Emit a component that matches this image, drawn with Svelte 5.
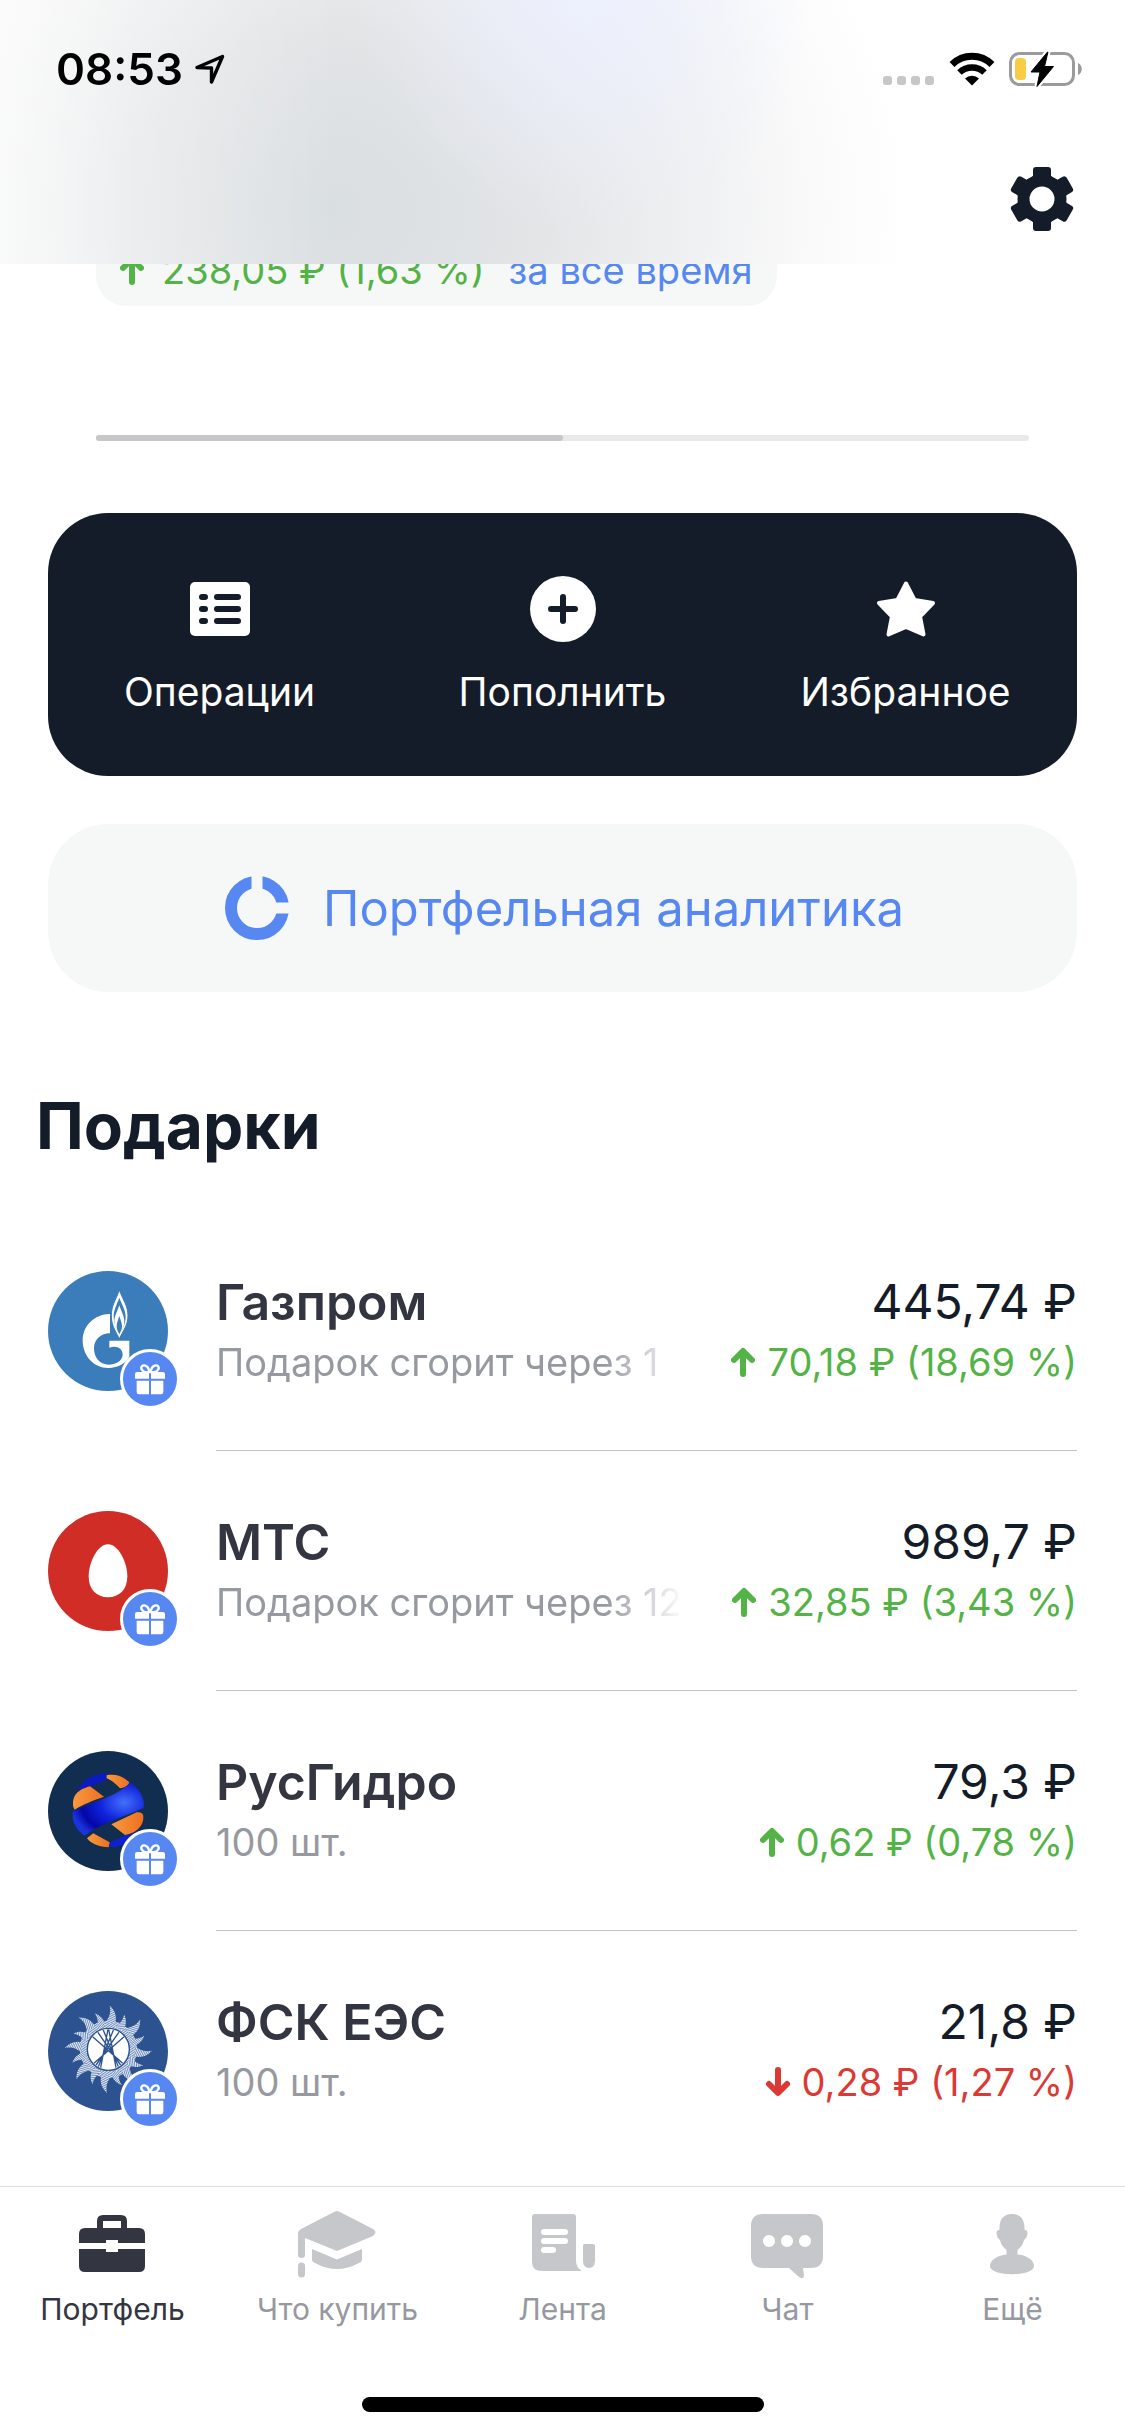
<script>
  const actions = [
    { id: 'operations', label: 'Операции' },
    { id: 'deposit', label: 'Пополнить' },
    { id: 'favorites', label: 'Избранное' }
  ];

  const gifts = [
    { id: 'gazprom', name: 'Газпром', note: 'Подарок сгорит через 1', price: '445,74 ₽', change: '70,18 ₽ (18,69 %)', up: true },
    { id: 'mts', name: 'МТС', note: 'Подарок сгорит через 12', price: '989,7 ₽', change: '32,85 ₽ (3,43 %)', up: true },
    { id: 'rushydro', name: 'РусГидро', note: '100 шт.', price: '79,3 ₽', change: '0,62 ₽ (0,78 %)', up: true },
    { id: 'fsk', name: 'ФСК ЕЭС', note: '100 шт.', price: '21,8 ₽', change: '0,28 ₽ (1,27 %)', up: false }
  ];

  const tabs = [
    { id: 'portfolio', label: 'Портфель' },
    { id: 'buy', label: 'Что купить' },
    { id: 'feed', label: 'Лента' },
    { id: 'chat', label: 'Чат' },
    { id: 'more', label: 'Ещё' }
  ];

  const teeth = [0, 60, 120, 180, 240, 300];

  // sun rays: angle and length factor
  const rays = Array.from({ length: 16 }, (_, i) => ({ angle: i * 22.5 + 8, scale: i % 2 ? 0.88 : 1 }));

  let activeTab = 'portfolio';
</script>

{#snippet arrow(up)}
  <svg class="arrow" class:down={!up} viewBox="0 0 24 30" aria-hidden="true">
    <path d="M12 27V5M3 13l9-9 9 9" fill="none" stroke="currentColor" stroke-width="6" stroke-linecap="round" stroke-linejoin="round" />
  </svg>
{/snippet}

<header class="top">
  <div class="status">
    <div class="status-side">
      <span class="time">08:53</span>
      <svg class="location" viewBox="0 0 30 30" aria-hidden="true">
        <path d="M2 13.500L27.500 2.500L16.500 28V14Z" fill="none" stroke="#000" stroke-width="3.400" stroke-linejoin="round" />
      </svg>
    </div>
    <div class="status-side indicators">
      <svg class="signal" viewBox="0 0 52 34" aria-hidden="true">
        {#each [0, 14, 28, 42] as x}
          <rect {x} y="24" width="9" height="9" rx="3" fill="#c7c7c9" />
        {/each}
      </svg>
      <svg class="wifi" viewBox="0 0 46 34" aria-hidden="true">
        <path d="M3 12.500a28.500 28.500 0 0 1 40 0" fill="none" stroke="#000" stroke-width="7" />
        <path d="M10.500 20.500a18 18 0 0 1 25 0" fill="none" stroke="#000" stroke-width="6.500" />
        <path d="M16 26.500a10 10 0 0 1 14 0L23 33.500Z" />
      </svg>
      <svg class="battery" viewBox="0 0 74 36" aria-hidden="true">
        <rect x="1.500" y="2.500" width="63" height="31" rx="9" fill="none" stroke="#9b9b9d" stroke-width="3" />
        <path d="M69 12c5 2 5 10 0 12Z" fill="#9b9b9d" />
        <rect x="6" y="7" width="11" height="22" rx="4" fill="#f8cd46" />
        <path d="M38.500 1L22 21h9l-3 14.500L44.500 15.500h-9L39 1Z" stroke="#fff" stroke-width="5" />
        <path d="M38.500 1L22 21h9l-3 14.500L44.500 15.500h-9L39 1Z" stroke="#000" stroke-linejoin="round" />
      </svg>
    </div>
  </div>
  <button class="settings" aria-label="Настройки">
    <svg viewBox="-32 -32 64 64" aria-hidden="true">
      <circle r="18.500" fill="none" stroke="#151c29" stroke-width="12" />
      {#each teeth as angle}
        <path d="M-12 -20L-9 -23V-29Q-9 -32 -6 -32H6Q9 -32 9 -29V-23L12 -20Z" fill="#151c29" transform="rotate({angle})" />
      {/each}
    </svg>
  </button>
</header>

<main>
  <section class="summary">
    <button class="profit">
      {@render arrow(true)}
      <span class="gain">238,05 ₽ (1,63 %)</span>
      <span class="period">за все время</span>
    </button>
    <div class="pager"><div class="pager-thumb"></div></div>
  </section>

  <section class="actions">
    {#each actions as action (action.id)}
      <button class="action">
        <svg viewBox="0 0 66 66" aria-hidden="true">
          {#if action.id === 'operations'}
            <rect x="3" y="6" width="60" height="54" rx="5" fill="#fff" />
            <path d="M15 21h3M15 33h3M15 45h3M30 21h21M30 33h21M30 45h21" stroke="#151c29" stroke-width="6" stroke-linecap="round" />
          {:else if action.id === 'deposit'}
            <circle cx="33" cy="33" r="33" fill="#fff" />
            <path d="M33 21v24M21 33h24" stroke="#151c29" stroke-width="6" stroke-linecap="round" />
          {:else}
            <path d="M33 7.500L41.500 24L60 27L47 40.500L50.500 58.500L33 51L15.500 58.500L19 40.500L6 27L24.500 24Z" fill="#fff" stroke="#fff" stroke-width="4" stroke-linejoin="round" />
          {/if}
        </svg>
        <span>{action.label}</span>
      </button>
    {/each}
  </section>

  <button class="analytics">
    <svg viewBox="0 0 64 64" aria-hidden="true">
      <circle cx="32" cy="32" r="26" fill="none" stroke="#5788f2" stroke-width="12" />
      <path d="M26.500 -1h11v21h-11ZM44 26.500h21v11H44Z" fill="#f6f8f8" />
    </svg>
    <span>Портфельная аналитика</span>
  </button>

  <h1>Подарки</h1>

  <ul class="gifts">
    {#each gifts as gift (gift.id)}
      <li class="gift">
        <div class="logo">
          <svg viewBox="0 0 360 360" aria-hidden="true">
            {#if gift.id === 'gazprom'}
              <circle cx="180" cy="180" r="180" fill="#3b7cba" />
              <path d="M186 129C138 129 104 166 104 208C104 256 138 291 180 291C212 291 236 276 244 256V209H184V230C204 222 224 230 224 252C222 272 202 281 182 281C154 281 138 258 138 232C138 206 158 187 186 187Z" fill="#fff" />
              <path d="M214 57C225 88 240 104 240 134C240 162 225 180 214 203C202 180 190 162 190 134C190 104 203 88 214 57Z" fill="#fff" stroke="#3b7cba" stroke-width="3" />
              <path d="M214 80C222 102 233 116 233 138C233 158 224 174 214 192C204 174 197 158 197 138C197 116 206 102 214 80Z" fill="#3b7cba" />
              <path d="M214 103C221 124 229 136 229 150C229 168 222 180 214 194C206 180 199 168 199 150C199 136 207 124 214 103Z" fill="#fff" />
              <path d="M214 135C218 148 222 156 222 166C222 176 218 182 214 190C210 182 206 176 206 166C206 156 210 148 214 135Z" fill="#3b7cba" />
            {:else if gift.id === 'mts'}
              <circle cx="180" cy="180" r="180" fill="#d02d26" />
              <path d="M180 100C212 100 238 156 238 196C238 236 214 259 180 259C146 259 122 236 122 196C122 156 148 100 180 100Z" fill="#fff" />
            {:else if gift.id === 'rushydro'}
              <defs>
                <radialGradient id="band" cx=".72" cy=".38" r=".75">
                  <stop offset="0" stop-color="#4470fa" />
                  <stop offset=".45" stop-color="#1023dc" />
                  <stop offset=".8" stop-color="#0406a6" />
                  <stop offset="1" stop-color="#1a34dd" />
                </radialGradient>
                <linearGradient id="amber" x1="0" x2="1">
                  <stop offset="0" stop-color="#f79a3e" />
                  <stop offset="1" stop-color="#ee6f22" />
                </linearGradient>
              </defs>
              <circle cx="180" cy="180" r="180" fill="#112d50" />
              <path d="M88 116C108 82 144 66 180 67L180 82C162 92 146 100 124 108Z" fill="#0c1bc0" />
              <path d="M76 168C72 140 82 118 126 106L168 137C136 148 104 160 80 176Z" fill="url(#amber)" />
              <path d="M176 73C202 68 226 76 244 94C242 104 230 110 216 112C202 98 194 90 176 82Z" fill="url(#amber)" />
              <path d="M76 180C130 156 214 134 246 94C276 112 292 148 287 170C250 190 160 214 110 254C82 236 68 204 76 180Z" fill="url(#band)" />
              <path d="M190 220L266 184C276 182 286 186 286 196C288 222 268 246 231 252Z" fill="url(#amber)" />
              <path d="M117 262L136 247L185 274L182 289C154 289 130 278 117 262Z" fill="url(#amber)" />
              <path d="M188 273L232 253C250 250 266 244 280 230C262 268 222 290 184 289Z" fill="#0c22cc" />
            {:else}
              <defs>
                <pattern id="hatch" width="6" height="6" patternUnits="userSpaceOnUse" patternTransform="rotate(-35)">
                  <rect width="6" height="6" fill="#6d8bba" />
                  <rect width="6" height="3" fill="#e8eef7" />
                </pattern>
                <clipPath id="disc"><circle cx="181" cy="175" r="60" /></clipPath>
              </defs>
              <circle cx="180" cy="180" r="180" fill="#2c528f" />
              <circle cx="181" cy="175" r="75" fill="none" stroke="url(#hatch)" stroke-width="22" />
              {#each rays as ray}
                <path d="M-20 -78C-12 -94 -6 -106 -14 -130C4 -118 12 -102 10 -80Z" fill="url(#hatch)" transform="translate(181 175) rotate({ray.angle}) scale({ray.scale})" />
              {/each}
              <circle cx="181" cy="175" r="63" fill="#fff" stroke="#2c528f" stroke-width="4" />
              <g clip-path="url(#disc)" stroke="#2c528f" stroke-width="4">
                <path d="M230 222L128 132M222 228L144 116M214 234L162 108M206 240L180 104M132 222L234 132M140 228L218 116M148 234L200 108M156 240L182 104" />
              </g>
            {/if}
          </svg>
          <span class="badge">
            <svg viewBox="0 0 90 96" aria-hidden="true">
              <path d="M43 27C32 30 17 24 19 13C22 3 40 5 43 27ZM47 27C58 30 73 24 71 13C68 3 50 5 47 27Z" fill="none" stroke="#fff" stroke-width="7" />
              <path d="M6 27H84Q90 27 90 33V47H48V30H42V47H0V33Q0 27 6 27ZM5 53H42V94H12Q5 94 5 87ZM48 53H85V87Q85 94 78 94H48Z" fill="#fff" />
            </svg>
          </span>
        </div>
        <div class="info">
          <div class="line">
            <h2>{gift.name}</h2>
            <span class="price">{gift.price}</span>
          </div>
          <div class="line">
            <p class="note" class:fade={gift.note.length > 10}>{gift.note}</p>
            <span class="change" class:loss={!gift.up}>
              {@render arrow(gift.up)}
              {gift.change}
            </span>
          </div>
        </div>
      </li>
    {/each}
  </ul>
</main>

<footer>
  <nav>
    {#each tabs as tab (tab.id)}
      <button class="tab" class:active={tab.id === activeTab} on:click={() => (activeTab = tab.id)}>
        <svg viewBox="1 0 80 70" fill="currentColor" aria-hidden="true">
          {#if tab.id === 'portfolio'}
            <path d="M25 18V11Q25 5 31 5H49Q55 5 55 11V18H67Q73 18 73 24V33H46V30H34V33H7V24Q7 18 13 18ZM31 18H49V11H31ZM7 39H34V42H46V39H73V56Q73 62 67 62H13Q7 62 7 56Z" fill-rule="evenodd" />
          {:else if tab.id === 'buy'}
            <path d="M38 1.500Q40 0.500 42 1.500L76 19Q81 22 76 26L40 41L8 28V45Q8 48 4.500 48T1 45V23Q1 21 4 19ZM15 39L40 49.500L65 39V49Q65 52 62 53Q40 65 18 53Q15 52 15 49Z" />
            <rect x="1" y="52.500" width="7" height="15" rx="3.500" />
          {:else if tab.id === 'feed'}
            <path d="M13 4H51Q54 4 54 7V50Q54 58 60 61H20Q10 61 10 52V7Q10 4 13 4ZM22 19a3 3 0 0 0 0 6H43a3 3 0 0 0 0-6ZM22 28a3 3 0 0 0 0 6H43a3 3 0 0 0 0-6ZM22 37a3 3 0 0 0 0 6H31a3 3 0 0 0 0-6Z" fill-rule="evenodd" />
            <path d="M62 34H71Q73 34 73 36V50Q73 58 67 58T61 50V36Q61 34 62 34Z" />
          {:else if tab.id === 'chat'}
            <path d="M16 4H64Q76 4 76 16V46Q76 58 64 58H56L57 66Q56 70 52 67L42 58H16Q4 58 4 46V16Q4 4 16 4ZM22 25a6 6 0 1 0 .01 0ZM40 25a6 6 0 1 0 .01 0ZM58 25a6 6 0 1 0 .01 0Z" fill-rule="evenodd" />
          {:else}
            <path d="M40 4C49 4 53 10 52.500 20C57 19 56 28 52 30C51 35 48 38 45.500 40V44.500C54 45 62 50 62 56C62 67 18 67 18 56C18 50 26 45 34.500 44.500V40C32 38 29 35 28 30C24 28 23 19 27.500 20C27 10 31 4 40 4Z" />
          {/if}
        </svg>
        <span>{tab.label}</span>
      </button>
    {/each}
  </nav>
  <div class="home-indicator"></div>
</footer>

<style>
  :global(body) {
    margin: 0;
    background: #fff;
    color: #151c29;
    font-family: Inter, 'Liberation Sans', sans-serif;
  }

  button {
    border: 0;
    padding: 0;
    background: none;
    color: inherit;
    font: inherit;
    cursor: pointer;
  }

  svg {
    display: block;
    flex: none;
  }

  .top {
    position: fixed;
    z-index: 2;
    top: 0;
    left: 0;
    right: 0;
    box-sizing: border-box;
    height: 264px;
    padding: 44px 42px 0 56px;
    background:
      linear-gradient(to right, rgba(255, 255, 255, 0.7), rgba(255, 255, 255, 0.35) 12%, rgba(255, 255, 255, 0) 30%),
      radial-gradient(ellipse 20% 90% at 52% 0%, rgba(236, 240, 255, 0.9), rgba(236, 240, 255, 0)),
      radial-gradient(ellipse 52% 190% at 29% 80%, #d9dee0 0%, #e2e4e6 35%, #eeeff0 60%, #fafafb 84%, #fff 100%);
  }

  .status {
    display: flex;
    justify-content: space-between;
    align-items: center;
    height: 50px;
  }

  .status-side {
    display: flex;
    align-items: center;
    gap: 12px;
  }

  .indicators {
    gap: 14px;
  }

  .time {
    color: #000;
    font-size: 44px;
    font-weight: 600;
    line-height: 50px;
  }

  .location {
    width: 30px;
  }

  .signal {
    width: 52px;
  }

  .wifi {
    width: 46px;
  }

  .battery {
    width: 74px;
  }

  .settings {
    display: block;
    margin: 73px 9px 0 auto;
  }

  .settings svg {
    width: 64px;
  }

  main {
    padding: 234px 48px 250px;
  }

  .summary {
    padding: 0 48px;
  }

  .profit {
    display: inline-flex;
    align-items: center;
    height: 72px;
    padding: 0 24px;
    border-radius: 30px;
    background: #f6f8f8;
    font-size: 38px;
  }

  .arrow {
    width: 24px;
    color: #54b346;
  }

  .arrow.down {
    color: #db3a34;
    transform: rotate(180deg);
  }

  .gain {
    margin: 0 24px 0 18px;
    color: #54b346;
  }

  .period {
    color: #5788f2;
  }

  .pager {
    height: 6px;
    margin-top: 129px;
    border-radius: 3px;
    background: #e9e9ea;
  }

  .pager-thumb {
    width: 50%;
    height: 6px;
    border-radius: 3px;
    background: #c7c7c9;
  }

  .actions {
    display: flex;
    margin-top: 72px;
    padding: 63px 0 59px;
    border-radius: 60px;
    background: #151c29;
    color: #fff;
  }

  .action {
    display: flex;
    flex: 1;
    flex-direction: column;
    align-items: center;
    gap: 24px;
    font-size: 39px;
    line-height: 51px;
  }

  .action svg {
    width: 66px;
  }

  .analytics {
    display: flex;
    justify-content: center;
    align-items: center;
    gap: 34px;
    width: 100%;
    height: 168px;
    margin-top: 48px;
    padding-left: 4px;
    border-radius: 60px;
    background: #f6f8f8;
    color: #5788f2;
    font-size: 49px;
  }

  .analytics svg {
    width: 64px;
  }

  h1 {
    margin: 94px -12px 0;
    font-size: 64px;
    font-weight: 700;
    line-height: 80px;
  }

  .gifts {
    margin: 45px 0 0;
    padding: 0;
    list-style: none;
  }

  .gift {
    display: flex;
    align-items: center;
    gap: 48px;
    height: 240px;
  }

  .logo {
    position: relative;
    flex: none;
    width: 120px;
    height: 120px;
  }

  .badge {
    position: absolute;
    right: -12px;
    bottom: -18px;
    display: flex;
    justify-content: center;
    align-items: center;
    width: 54px;
    height: 54px;
    border: 3px solid #fff;
    border-radius: 50%;
    background: #5788f2;
  }

  .badge svg {
    width: 30px;
  }

  .info {
    display: flex;
    flex: 1;
    flex-direction: column;
    justify-content: center;
    box-sizing: border-box;
    min-width: 0;
    height: 240px;
    padding-top: 2px;
    border-bottom: 1px solid #c2c3c6;
  }

  .gift:last-child .info {
    border-bottom-color: transparent;
  }

  .line {
    display: flex;
    justify-content: space-between;
    align-items: center;
    gap: 48px;
    height: 60px;
    white-space: nowrap;
  }

  h2 {
    margin: 0;
    color: #333641;
    font-size: 50px;
    font-weight: 600;
  }

  .price {
    font-size: 48px;
  }

  .note {
    flex: 1;
    min-width: 0;
    margin: 0;
    overflow: hidden;
    color: #9699a0;
    font-size: 38px;
  }

  .note.fade {
    mask-image: linear-gradient(to left, transparent, #000 80px);
  }

  .change {
    display: flex;
    align-items: center;
    gap: 12px;
    color: #54b346;
    font-size: 38px;
  }

  .change.loss {
    color: #db3a34;
  }

  footer {
    position: fixed;
    z-index: 2;
    right: 0;
    bottom: 0;
    left: 0;
    box-sizing: border-box;
    height: 250px;
    border-top: 1px solid #dcdddf;
    background: #fff;
  }

  nav {
    display: flex;
  }

  .tab {
    display: flex;
    flex: 1;
    flex-direction: column;
    align-items: center;
    gap: 9px;
    padding-top: 23px;
    color: #c5c7ca;
    font-size: 30px;
    line-height: 40px;
  }

  .tab svg {
    width: 80px;
  }

  .tab span {
    color: #9699a0;
  }

  .tab.active,
  .tab.active span {
    color: #333641;
  }

  .home-indicator {
    width: 402px;
    height: 15px;
    margin: 68px auto 0;
    border-radius: 8px;
    background: #000;
  }
</style>
